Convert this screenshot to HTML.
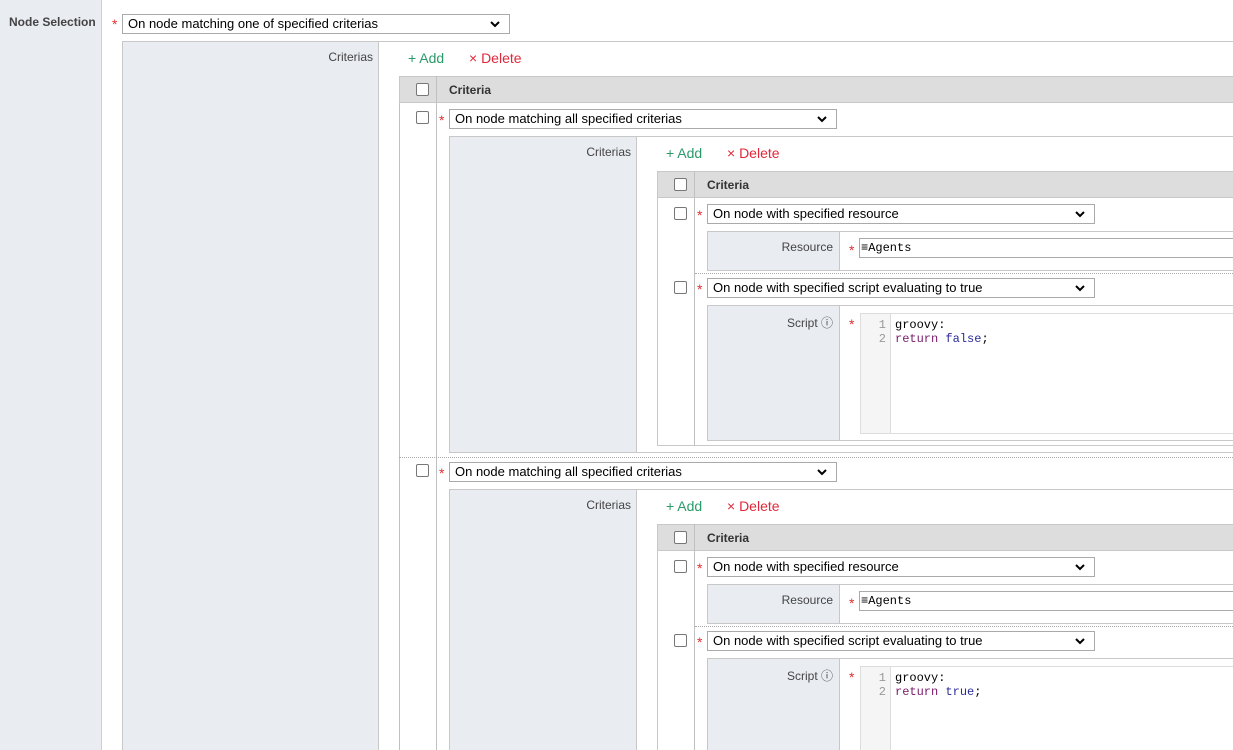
<!DOCTYPE html>
<html><head><meta charset="utf-8">
<style>
*{box-sizing:border-box;margin:0;padding:0}
html,body{width:1233px;height:750px;overflow:hidden}
body{position:relative;background:#fff;font-family:"Liberation Sans",sans-serif;font-size:12px;color:#333}
#w{position:absolute;left:0;top:0;width:1233px;height:750px;overflow:hidden}
.a{position:absolute}
.lbl{background:#e9ecf1}
.bd{border:1px solid #c8c8c8}
.sel{position:absolute;height:20px;border:1px solid #aaa;background:#fff;font-size:13px;color:#000;padding:1px 5px;line-height:16px;white-space:nowrap}
.sel svg{position:absolute;right:9px;top:6px}
.star{position:absolute;color:#e03030;font-size:14px;margin-top:1px}
.cb{position:absolute;width:13px;height:13px;border:1px solid #777;border-radius:2px;background:#fff}
.add{position:absolute;color:#2a9a6a;font-size:14px}
.del{position:absolute;color:#e0283a;font-size:14px}
.rt{position:absolute;text-align:right;color:#444;font-size:12px}
.hd{position:absolute;background:#ddd;height:27px;border:1px solid #c8c8c8}
.hd b{position:absolute;top:6px;font-size:12px;color:#333}
.dot{position:absolute;height:0;border-top:1px dotted #aaa}
.vl{position:absolute;width:1px;background:#c0c0c0}
.code{font-family:"Liberation Mono",monospace;font-size:12px;line-height:14px}
.kw{color:#7a1a6a}.kv{color:#2a2a9a}
</style></head><body><div id="w">
<div class="a lbl" style="left:0;top:0;width:102px;height:750px;border-right:1px solid #d0d0d0"></div>
<div class="a" style="left:9px;top:15px;font-weight:bold;font-size:12px;color:#444">Node Selection</div>
<div class="star" style="left:112px;top:15px">*</div>
<div class="sel" style="left:122px;top:14px;width:388px">On node matching one of specified criterias<svg width="10" height="7" viewBox="0 0 10 7"><path d="M1 1l4 4 4-4" stroke="#000" stroke-width="2" fill="none"/></svg></div>

<div class="a bd" style="left:122px;top:41px;width:1120px;height:900px;border-right:none"></div>
<div class="a lbl" style="left:123px;top:42px;width:256px;height:900px;border-right:1px solid #c8c8c8"></div>
<div class="rt" style="left:200px;width:173px;top:50px">Criterias</div>
<div class="add" style="left:408px;top:50px">+ Add</div>
<div class="del" style="left:469px;top:50px">× Delete</div>
<div class="a" style="left:399px;top:76px;width:840px;height:900px;border-left:1px solid #c0c0c0"></div>
<div class="hd" style="left:399px;top:76px;width:840px"><b style="left:49px">Criteria</b></div>
<div class="cb" style="left:416px;top:83px"></div>
<div class="vl" style="left:436px;top:76px;height:900px"></div>

<!-- block 1 -->
<div class="a" style="left:0;top:104px;width:1233px;height:360px">
 <div class="cb" style="left:416px;top:7px"></div>
 <div class="star" style="left:439px;top:7px">*</div>
 <div class="sel" style="left:449px;top:5px;width:388px">On node matching all specified criterias<svg width="10" height="7" viewBox="0 0 10 7"><path d="M1 1l4 4 4-4" stroke="#000" stroke-width="2" fill="none"/></svg></div>
 <div class="a bd" style="left:449px;top:32px;width:800px;height:317px"></div>
 <div class="a lbl" style="left:450px;top:33px;width:187px;height:315px;border-right:1px solid #c8c8c8"></div>
 <div class="rt" style="left:460px;width:171px;top:41px">Criterias</div>
 <div class="add" style="left:666px;top:41px">+ Add</div>
 <div class="del" style="left:727px;top:41px">× Delete</div>
 <div class="a bd" style="left:657px;top:67px;width:600px;height:275px"></div>
 <div class="hd" style="left:657px;top:67px;width:600px"><b style="left:49px">Criteria</b></div>
 <div class="cb" style="left:674px;top:74px"></div>
 <div class="vl" style="left:694px;top:67px;height:275px"></div>
 <div class="cb" style="left:674px;top:103px"></div>
 <div class="star" style="left:697px;top:102px">*</div>
 <div class="sel" style="left:707px;top:100px;width:388px">On node with specified resource<svg width="10" height="7" viewBox="0 0 10 7"><path d="M1 1l4 4 4-4" stroke="#000" stroke-width="2" fill="none"/></svg></div>
 <div class="a bd" style="left:707px;top:127px;width:560px;height:40px"></div>
 <div class="a lbl" style="left:708px;top:128px;width:132px;height:38px;border-right:1px solid #c8c8c8"></div>
 <div class="rt" style="left:710px;width:123px;top:136px">Resource</div>
 <div class="star" style="left:849px;top:137px">*</div>
 <div class="a code" style="left:859px;top:134px;width:400px;height:20px;border:1px solid #aaa;padding:2px 1px;color:#000">≡Agents</div>
 <div class="dot" style="left:695px;top:169px;width:560px"></div>
 <div class="cb" style="left:674px;top:177px"></div>
 <div class="star" style="left:697px;top:176px">*</div>
 <div class="sel" style="left:707px;top:174px;width:388px">On node with specified script evaluating to true<svg width="10" height="7" viewBox="0 0 10 7"><path d="M1 1l4 4 4-4" stroke="#000" stroke-width="2" fill="none"/></svg></div>
 <div class="a bd" style="left:707px;top:201px;width:560px;height:136px"></div>
 <div class="a lbl" style="left:708px;top:202px;width:132px;height:134px;border-right:1px solid #c8c8c8"></div>
 <div class="rt" style="left:710px;width:123px;top:210px">Script ⓘ</div>
 <div class="star" style="left:849px;top:211px">*</div>
 <div class="a" style="left:860px;top:209px;width:400px;height:121px;border:1px solid #ddd"></div>
 <div class="a code" style="left:861px;top:210px;width:30px;height:119px;background:#f5f5f5;border-right:1px solid #ddd;text-align:right;padding:4px 4px 0 0;color:#999">1<br>2</div>
 <div class="a code" style="left:895px;top:214px;color:#000">groovy:<br><span class="kw">return</span> <span class="kv">false</span>;</div>
 <div class="dot" style="left:399px;top:353px;width:840px"></div>
</div>

<!-- block 2 -->
<div class="a" style="left:0;top:457px;width:1233px;height:293px;overflow:hidden">
 <div class="cb" style="left:416px;top:7px"></div>
 <div class="star" style="left:439px;top:7px">*</div>
 <div class="sel" style="left:449px;top:5px;width:388px">On node matching all specified criterias<svg width="10" height="7" viewBox="0 0 10 7"><path d="M1 1l4 4 4-4" stroke="#000" stroke-width="2" fill="none"/></svg></div>
 <div class="a bd" style="left:449px;top:32px;width:800px;height:400px"></div>
 <div class="a lbl" style="left:450px;top:33px;width:187px;height:400px;border-right:1px solid #c8c8c8"></div>
 <div class="rt" style="left:460px;width:171px;top:41px">Criterias</div>
 <div class="add" style="left:666px;top:41px">+ Add</div>
 <div class="del" style="left:727px;top:41px">× Delete</div>
 <div class="a bd" style="left:657px;top:67px;width:600px;height:400px"></div>
 <div class="hd" style="left:657px;top:67px;width:600px"><b style="left:49px">Criteria</b></div>
 <div class="cb" style="left:674px;top:74px"></div>
 <div class="vl" style="left:694px;top:67px;height:400px"></div>
 <div class="cb" style="left:674px;top:103px"></div>
 <div class="star" style="left:697px;top:102px">*</div>
 <div class="sel" style="left:707px;top:100px;width:388px">On node with specified resource<svg width="10" height="7" viewBox="0 0 10 7"><path d="M1 1l4 4 4-4" stroke="#000" stroke-width="2" fill="none"/></svg></div>
 <div class="a bd" style="left:707px;top:127px;width:560px;height:40px"></div>
 <div class="a lbl" style="left:708px;top:128px;width:132px;height:38px;border-right:1px solid #c8c8c8"></div>
 <div class="rt" style="left:710px;width:123px;top:136px">Resource</div>
 <div class="star" style="left:849px;top:137px">*</div>
 <div class="a code" style="left:859px;top:134px;width:400px;height:20px;border:1px solid #aaa;padding:2px 1px;color:#000">≡Agents</div>
 <div class="dot" style="left:695px;top:169px;width:560px"></div>
 <div class="cb" style="left:674px;top:177px"></div>
 <div class="star" style="left:697px;top:176px">*</div>
 <div class="sel" style="left:707px;top:174px;width:388px">On node with specified script evaluating to true<svg width="10" height="7" viewBox="0 0 10 7"><path d="M1 1l4 4 4-4" stroke="#000" stroke-width="2" fill="none"/></svg></div>
 <div class="a bd" style="left:707px;top:201px;width:560px;height:200px"></div>
 <div class="a lbl" style="left:708px;top:202px;width:132px;height:200px;border-right:1px solid #c8c8c8"></div>
 <div class="rt" style="left:710px;width:123px;top:210px">Script ⓘ</div>
 <div class="star" style="left:849px;top:211px">*</div>
 <div class="a" style="left:860px;top:209px;width:400px;height:200px;border:1px solid #ddd"></div>
 <div class="a code" style="left:861px;top:210px;width:30px;height:200px;background:#f5f5f5;border-right:1px solid #ddd;text-align:right;padding:4px 4px 0 0;color:#999">1<br>2</div>
 <div class="a code" style="left:895px;top:214px;color:#000">groovy:<br><span class="kw">return</span> <span class="kv">true</span>;</div>
</div>
</div></body></html>
